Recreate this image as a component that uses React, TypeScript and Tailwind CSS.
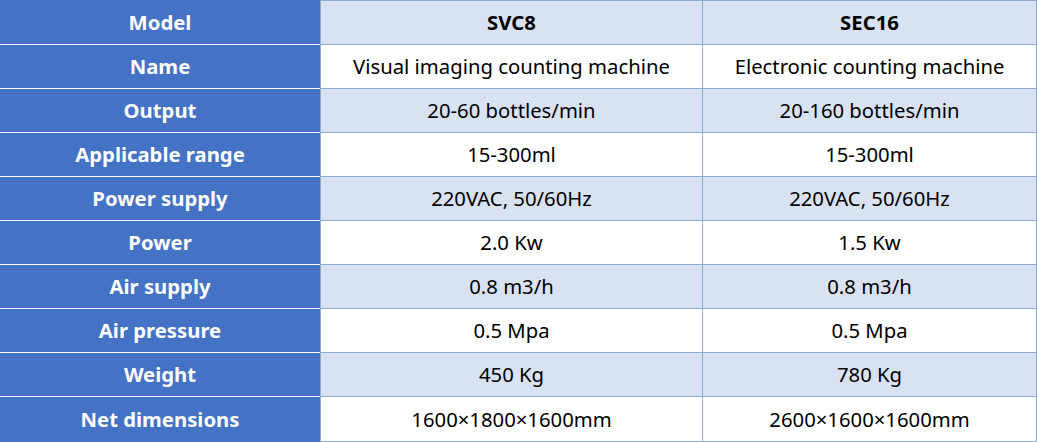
import React from "react";

const rows: [string, string, string][] = [
  ["Model", "SVC8", "SEC16"],
  ["Name", "Visual imaging counting machine", "Electronic counting machine"],
  ["Output", "20-60 bottles/min", "20-160 bottles/min"],
  ["Applicable range", "15-300ml", "15-300ml"],
  ["Power supply", "220VAC, 50/60Hz", "220VAC, 50/60Hz"],
  ["Power", "2.0 Kw", "1.5 Kw"],
  ["Air supply", "0.8 m3/h", "0.8 m3/h"],
  ["Air pressure", "0.5 Mpa", "0.5 Mpa"],
  ["Weight", "450 Kg", "780 Kg"],
  ["Net dimensions", "1600×1800×1600mm", "2600×1600×1600mm"],
];

export default function App() {
  return (
    <div
      className="w-[1037px] h-[442px] bg-white flex flex-col text-[20.3px] leading-none"
      style={{ fontFamily: '"Noto Sans", "Open Sans", sans-serif' }}
    >
      {rows.map(([label, a, b], i) => {
        const first = i === 0;
        const last = i === rows.length - 1;
        const bg = i % 2 === 0 ? "bg-[#D9E2F3]" : "bg-white";
        return (
          <div key={label} className={`flex ${first || last ? "h-[45px]" : "h-[44px]"}`}>
            <div
              className={`w-[320px] shrink-0 bg-[#4472C4] text-white font-bold flex items-center justify-center ${
                last ? "" : "border-b border-white"
              }`}
            >
              {label}
            </div>
            <div
              className={`w-[382px] shrink-0 ${bg} border-l border-b border-[#8EAADB] ${
                first ? "border-t font-bold" : ""
              } flex items-center justify-center text-black`}
            >
              {a}
            </div>
            <div
              className={`w-[335px] shrink-0 ${bg} border-l border-r border-b border-[#8EAADB] ${
                first ? "border-t font-bold" : ""
              } flex items-center justify-center text-black`}
            >
              {b}
            </div>
          </div>
        );
      })}
    </div>
  );
}
